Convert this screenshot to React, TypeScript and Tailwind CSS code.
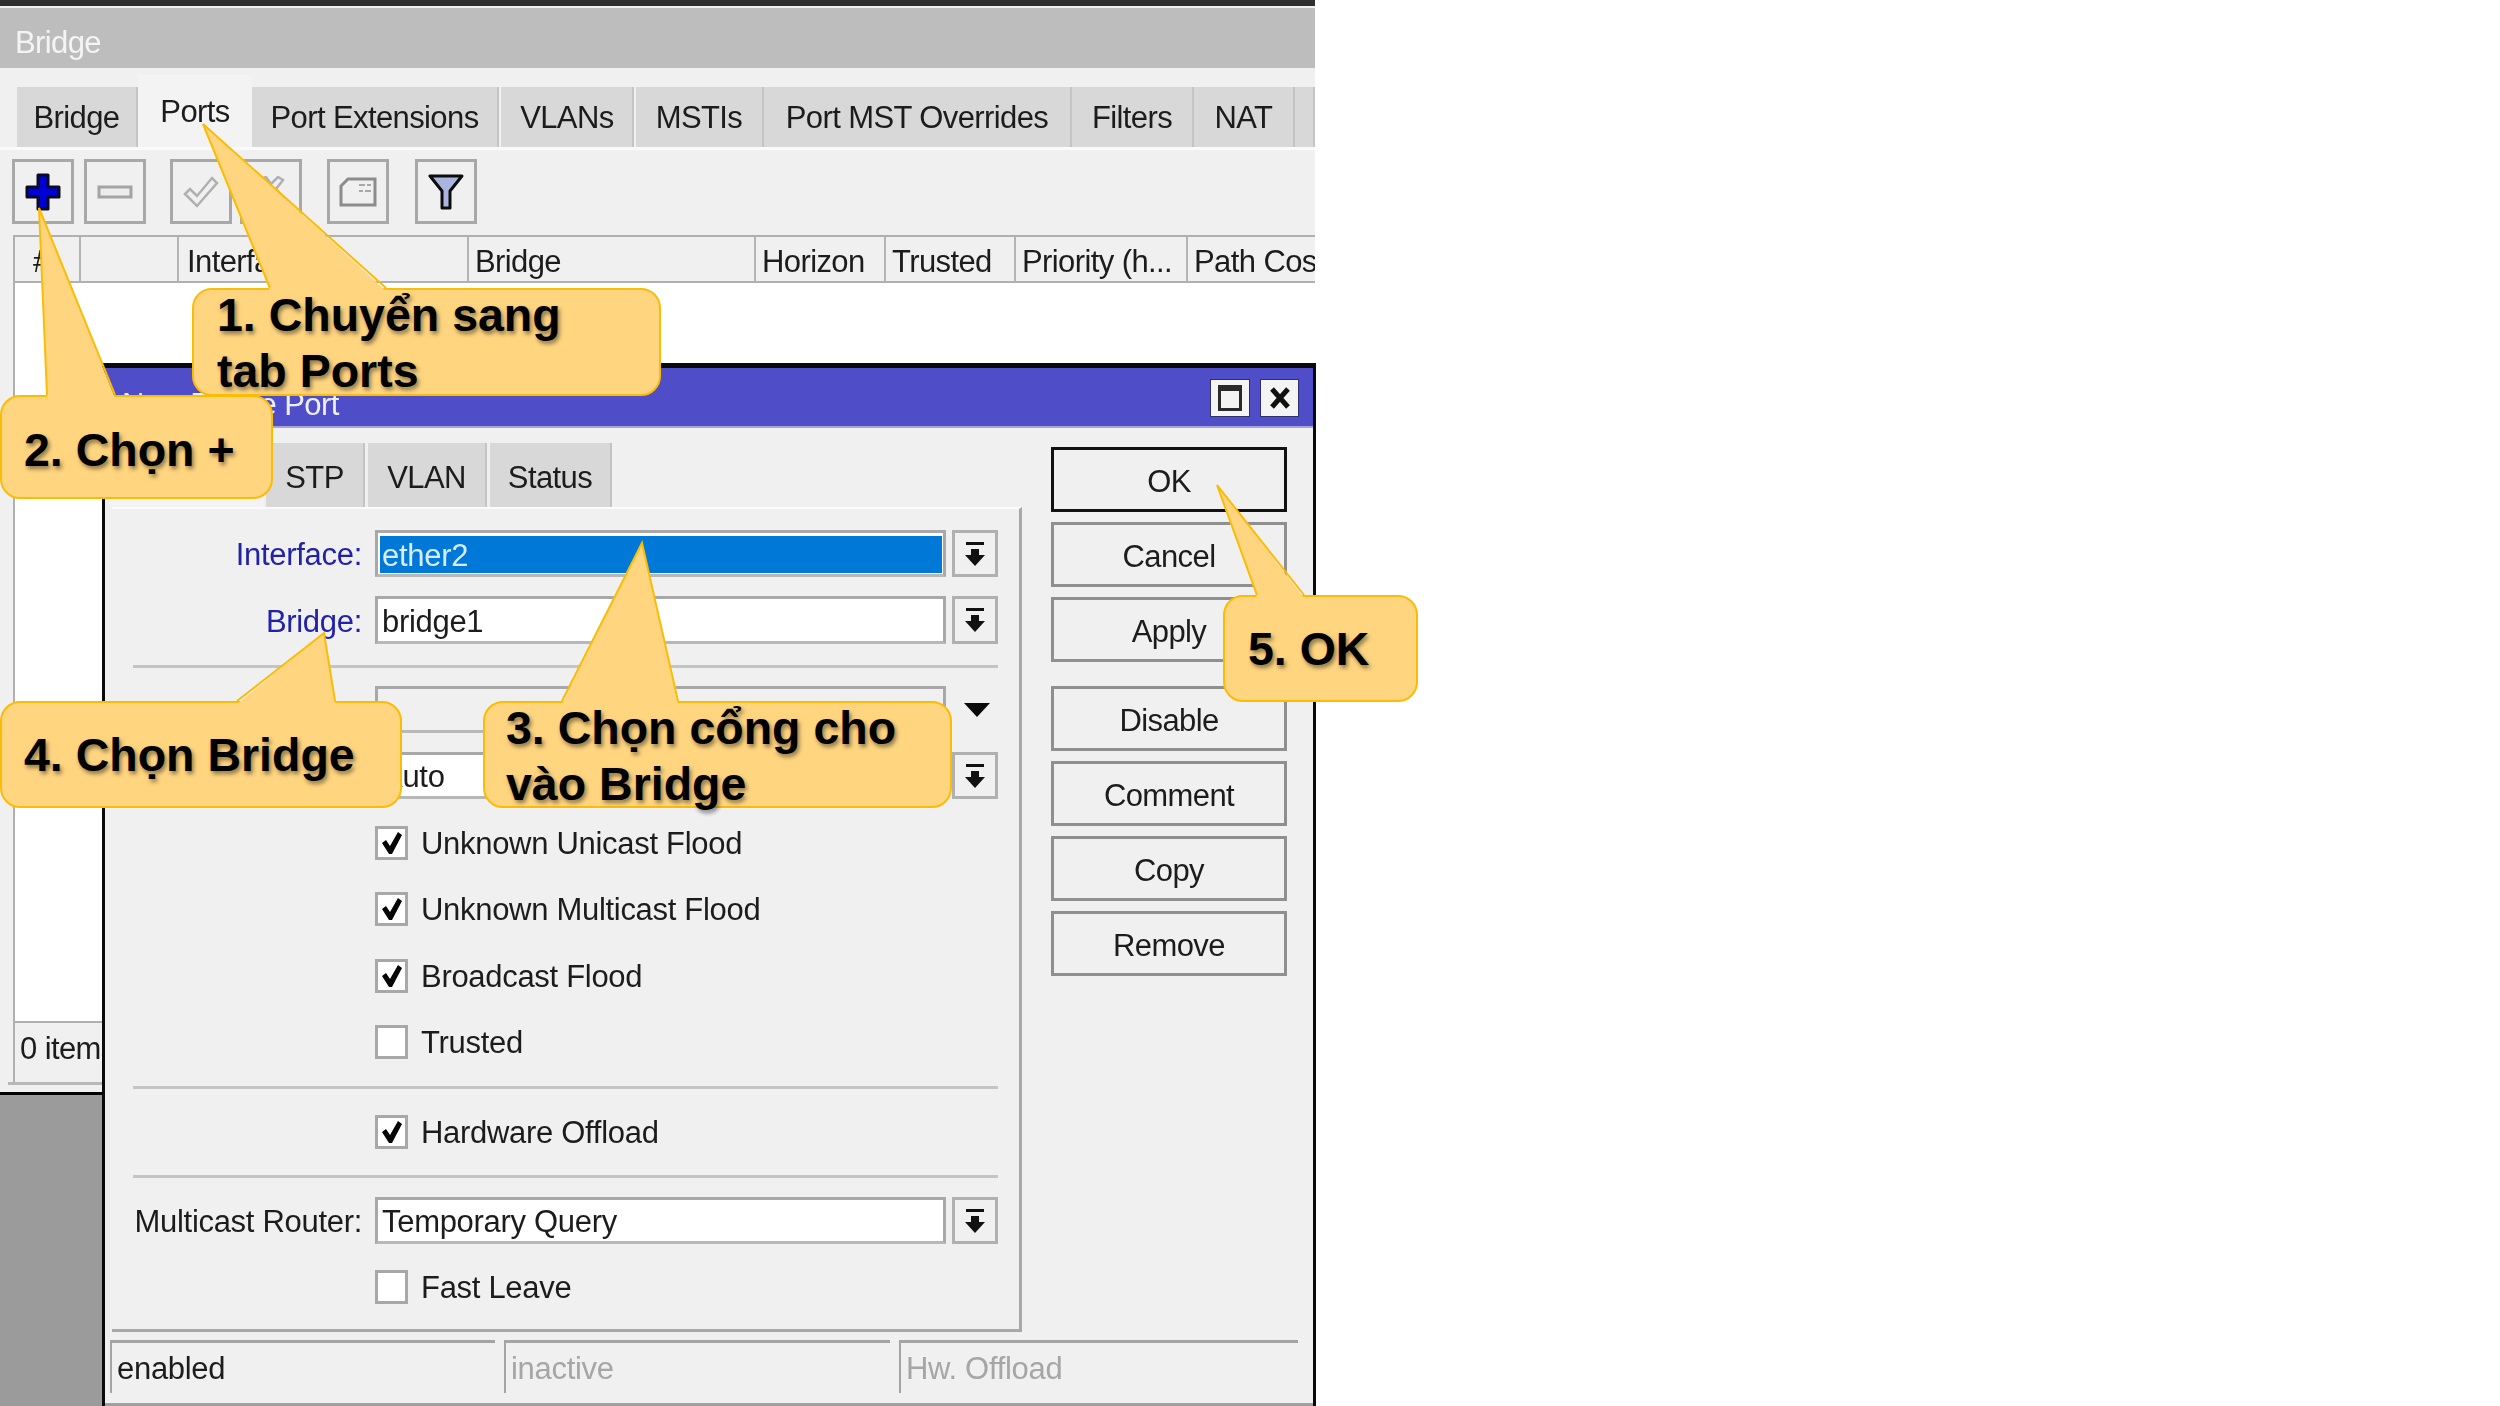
const uiFont = "font-['Liberation_Sans',Arial,sans-serif] text-[31px] leading-none tracking-[-0.3px] text-[#1c1c1c]";
const tabFont = "font-['Liberation_Sans',Arial,sans-serif] text-[31px] leading-none tracking-[-0.6px] text-[#1c1c1c]";

function DropIcon() {
  return (
    <svg width="24" height="26" viewBox="0 0 24 26" className="shrink-0">
      <rect x="3" y="1" width="18" height="3" fill="#111" />
      <path d="M8 8h8v6h6L12 25 2 14h6z" fill="#111" />
    </svg>
  );
}

function CheckMark() {
  return (
    <svg width="22" height="24" viewBox="0 0 22 24">
      <path d="M1 12l4-3 4 6L17 1l4 3-10 19H8z" fill="#050505" />
    </svg>
  );
}

function MainTab({ label, width, active }: { label: string; width: string; active?: boolean }) {
  return (
    <div className={`${width} ${active ? 'h-[72px] bg-[#f3f3f3]' : 'h-[60px] bg-[#d8d8d8] border-r-2 border-[#c4c4c4]'} shrink-0 flex items-center justify-center`}>
      <span className={tabFont}>{label}</span>
    </div>
  );
}

function HeadCell({ label, width, className }: { label: string; width: string; className?: string }) {
  return (
    <div className={`${width} shrink-0 h-full border-r-2 border-[#b4b4b4] pt-[5px] flex items-center overflow-hidden whitespace-nowrap ${className ?? 'pl-[6px]'}`}>
      <span className={tabFont}>{label}</span>
    </div>
  );
}

function ToolButton({ children, className }: { children: React.ReactNode; className: string }) {
  return (
    <div className={`w-[62px] h-[65px] border-[3px] border-[#a8a8a8] flex items-center justify-center shrink-0 ${className}`}>
      {children}
    </div>
  );
}

function DialogTab({ label, width }: { label: string; width: string }) {
  return (
    <div className={`${width} h-[64px] mr-[3px] pt-[5px] bg-[#d8d8d8] border-r-2 border-[#c4c4c4] flex items-center justify-center shrink-0`}>
      <span className={tabFont}>{label}</span>
    </div>
  );
}

function FieldRow({ label, value, blue, height, className }: { label: string; value: string; blue?: boolean; height: string; className: string }) {
  return (
    <div className={`flex ${height} ${className}`}>
      <div className={`w-[250px] pt-[2px] flex items-center justify-end ${uiFont} ${blue ? '!text-[#2222a8]' : ''}`}>{label}</div>
      <div className="ml-[13px] w-[571px] border-[3px] border-[#a8a8a8] border-b-[#b8b8b8] bg-white flex items-center p-[2px]">
        <div className={`w-full h-full pt-[2px] flex items-center pl-[2px] ${uiFont}`}>{value}</div>
      </div>
      <div className="ml-[6px] w-[46px] border-[3px] border-[#b0b0b0] flex items-center justify-center"><DropIcon /></div>
    </div>
  );
}

function Check({ label, checked, className }: { label: string; checked?: boolean; className: string }) {
  return (
    <div className={`flex items-center h-[34px] pl-[263px] ${className}`}>
      <div className="w-[33px] h-[34px] border-[3px] border-[#a8a8a8] bg-white flex items-center justify-center shrink-0">
        {checked && <CheckMark />}
      </div>
      <span className={`ml-[13px] whitespace-nowrap ${uiFont}`}>{label}</span>
    </div>
  );
}

function ActionButton({ label, primary, className }: { label: string; primary?: boolean; className?: string }) {
  return (
    <div className={`w-[236px] h-[65px] pt-[3px] border-[3px] ${primary ? 'border-[#111]' : 'border-[#8f8f8f]'} flex items-center justify-center ${className ?? ''}`}>
      <span className={tabFont}>{label}</span>
    </div>
  );
}

function StatusCell({ label, width, dim }: { label: string; width: string; dim?: boolean }) {
  return (
    <div className={`${width} h-[53px] border-t-[3px] border-l-2 border-[#a4a4a4] pl-[5px] flex items-center`}>
      <span className={`${uiFont} ${dim ? '!text-[#a6a6a6]' : ''}`}>{label}</span>
    </div>
  );
}

const calloutText = "font-['Liberation_Sans',Arial,sans-serif] font-bold text-[46.5px] leading-[56px] text-black [text-shadow:2px_3px_4px_rgba(0,0,0,0.45)]";

export default function App() {
  return (
    <div className="relative w-[2500px] h-[1406px] overflow-hidden bg-white">
      {/* desktop behind the windows */}
      <div className="absolute left-0 top-[1095px] w-[1315px] h-[311px] bg-[#9b9b9b]" />

      {/* Bridge window */}
      <div className="absolute left-0 top-0 w-[1315px] h-[1095px] blur-[0.5px] bg-[#f0f0f0] border-t-[6px] border-b-[3px] border-t-[#2e2e2e] border-b-black pt-[2px] flex flex-col">
        <div className="h-[60px] shrink-0 bg-[#bdbdbd] pl-[15px] flex items-center">
          <span className={`${tabFont} !text-[#f4f4f4] pt-[8px]`}>Bridge</span>
        </div>
        <div className="h-[79px] shrink-0 pl-[17px] flex items-end overflow-hidden">
          <MainTab label="Bridge" width="w-[121px]" />
          <MainTab label="Ports" width="w-[114px]" active />
          <MainTab label="Port Extensions" width="w-[247px]" />
          <div className="w-[3px]" />
          <MainTab label="VLANs" width="w-[133px]" />
          <div className="w-[2px]" />
          <MainTab label="MSTIs" width="w-[128px]" />
          <MainTab label="Port MST Overrides" width="w-[308px]" />
          <MainTab label="Filters" width="w-[122px]" />
          <MainTab label="NAT" width="w-[101px]" />
          <MainTab label="" width="w-[20px]" />
        </div>
        <div className="h-[3px] shrink-0 bg-[#fafafa]" />
        <div className="h-[74px] shrink-0 pt-[9px] pl-[12px] flex items-start">
          <ToolButton className="">
            <svg width="36" height="38" viewBox="0 0 36 38">
              <path d="M13 2h10v12h11v10H23v12H13V24H2V14h11z" fill="#0000d8" stroke="#0b0b28" strokeWidth="3" strokeLinejoin="round" />
            </svg>
          </ToolButton>
          <ToolButton className="ml-[10px]">
            <svg width="36" height="14" viewBox="0 0 36 14">
              <rect x="2" y="2" width="32" height="10" fill="#ececec" stroke="#a4a4a4" strokeWidth="3" />
            </svg>
          </ToolButton>
          <ToolButton className="ml-[24px]">
            <svg width="36" height="32" viewBox="0 0 36 32">
              <path d="M2 18l5-5 7 7L29 2l5 5-20 23z" fill="none" stroke="#b0b0b0" strokeWidth="2.5" />
            </svg>
          </ToolButton>
          <ToolButton className="ml-[8px]">
            <svg width="36" height="32" viewBox="0 0 36 32">
              <path d="M8 3l5-2 5 7 7-7 5 3-7 9 8 9-5 4-7-7-7 7-5-4 8-9z" fill="none" stroke="#b0b0b0" strokeWidth="2.5" />
            </svg>
          </ToolButton>
          <ToolButton className="ml-[25px]">
            <svg width="38" height="30" viewBox="0 0 38 30">
              <path d="M9 2h27v26H2V9z" fill="none" stroke="#8c8c8c" strokeWidth="3" />
              <path d="M20 8h6M28 8h4M20 14h4M26 14h6" stroke="#a8a8a8" strokeWidth="2" />
            </svg>
          </ToolButton>
          <ToolButton className="ml-[26px]">
            <svg width="36" height="38" viewBox="0 0 36 38">
              <path d="M2 3h32l-12 15v17h-8V18z" fill="#aab4e0" stroke="#0c0c0c" strokeWidth="3" strokeLinejoin="round" />
            </svg>
          </ToolButton>
        </div>
        <div className="h-[11px] shrink-0" />
        <div className="h-[48px] shrink-0 ml-[13px] flex border-y-2 border-l-2 border-[#b0b0b0] overflow-hidden">
          <HeadCell label="#" width="w-[66px]" className="pl-[18px]" />
          <HeadCell label="" width="w-[98px]" />
          <HeadCell label="Interface" width="w-[290px]" className="pl-[8px]" />
          <HeadCell label="Bridge" width="w-[287px]" />
          <HeadCell label="Horizon" width="w-[130px]" />
          <HeadCell label="Trusted" width="w-[130px]" />
          <HeadCell label="Priority (h..." width="w-[172px]" />
          <HeadCell label="Path Cost" width="w-[130px]" />
        </div>
        <div className="flex-1 ml-[13px] bg-white border-l-2 border-[#b0b0b0]" />
        <div className="h-[61px] shrink-0 ml-[13px] pb-[8px] border-l-2 border-t-2 border-[#b0b0b0] pl-[5px] flex items-center">
          <span className={tabFont}>0 items</span>
        </div>
        <div className="h-[10px] shrink-0 ml-[8px] border-t-[3px] border-[#b8b8b8]" />
      </div>

      {/* New Bridge Port dialog */}
      <div className="absolute left-[102px] top-[363px] w-[1214px] h-[1043px] blur-[0.5px] border-x-[3px] border-t-[5px] border-[#0a0a0a] bg-[#f0f0f0] flex flex-col">
        <div className="h-[60px] shrink-0 bg-[#4f4ec8] border-b-2 border-[#a5a5dc] pl-[17px] pr-[14px] flex items-center justify-between">
          <span className={`${tabFont} !text-[#eeeefa] pt-[14px]`}>New Bridge Port</span>
          <div className="flex gap-[10px] pt-[2px]">
            <div className="w-[40px] h-[38px] bg-[#f4f4f4] border border-[#30306e] flex items-center justify-center">
              <div className="w-[24px] h-[26px] border-[3px] border-t-[6px] border-[#2a2a2a]" />
            </div>
            <div className="w-[39px] h-[38px] bg-[#f4f4f4] border border-[#30306e] flex items-center justify-center">
              <svg width="22" height="24" viewBox="0 0 22 24">
                <path d="M3 3l16 18M19 3L3 21" stroke="#111" strokeWidth="5" />
              </svg>
            </div>
          </div>
        </div>
        <div className="flex h-[904px] shrink-0">
          <div className="w-[917px] flex flex-col">
            <div className="h-[79px] shrink-0 pl-[5px] pr-0 flex items-end">
              <div className="w-[154px] h-[72px] bg-[#f3f3f3] mr-[2px] flex items-center justify-center">
                <span className={tabFont}>General</span>
              </div>
              <DialogTab label="STP" width="w-[99px]" />
              <DialogTab label="VLAN" width="w-[119px]" />
              <DialogTab label="Status" width="w-[122px]" />
            </div>
            <div className="h-[825px] ml-[7px] border-t-2 border-t-[#fbfbfb] border-r-[3px] border-b-[3px] border-r-[#a8a8a8] border-b-[#a8a8a8] flex flex-col">
              <FieldRow label="Interface:" value="" blue height="h-[47px]" className="mt-[21px]" />
              <FieldRow label="Bridge:" value="bridge1" blue height="h-[48px]" className="mt-[19px]" />
              <div className="mt-[21px] ml-[21px] w-[865px] h-[3px] bg-[#c4c4c4] shrink-0" />
              <div className="mt-[18px] h-[47px] flex shrink-0">
                <div className="ml-[263px] w-[571px] border-[3px] border-[#a8a8a8] border-b-[#b8b8b8] bg-[#f0f0f0]" />
                <div className="ml-[8px] w-[46px] flex items-center justify-center">
                  <svg width="28" height="16" viewBox="0 0 28 16"><path d="M1 1h26L14 15z" fill="#0a0a0a" /></svg>
                </div>
              </div>
              <FieldRow label="" value="Auto" height="h-[47px]" className="mt-[19px]" />
              <Check label="Unknown Unicast Flood" checked className="mt-[27px]" />
              <Check label="Unknown Multicast Flood" checked className="mt-[32px]" />
              <Check label="Broadcast Flood" checked className="mt-[33px]" />
              <Check label="Trusted" className="mt-[32px]" />
              <div className="mt-[27px] ml-[21px] w-[865px] h-[3px] bg-[#c4c4c4] shrink-0" />
              <Check label="Hardware Offload" checked className="mt-[26px]" />
              <div className="mt-[26px] ml-[21px] w-[865px] h-[3px] bg-[#c4c4c4] shrink-0" />
              <FieldRow label="Multicast Router:" value="Temporary Query" height="h-[47px]" className="mt-[19px]" />
              <Check label="Fast Leave" className="mt-[26px]" />
            </div>
          </div>
          <div className="pt-[19px] pl-[29px] flex flex-col gap-[10px]">
            <ActionButton label="OK" primary />
            <ActionButton label="Cancel" />
            <ActionButton label="Apply" />
            <ActionButton label="Disable" className="mt-[14px]" />
            <ActionButton label="Comment" />
            <ActionButton label="Copy" />
            <ActionButton label="Remove" />
          </div>
        </div>
        <div className="mt-[8px] pl-[5px] flex gap-[9px]">
          <StatusCell label="enabled" width="w-[385px]" />
          <StatusCell label="inactive" width="w-[386px]" dim />
          <StatusCell label="Hw. Offload" width="w-[399px]" dim />
        </div>
        <div className="mt-auto h-[3px] bg-[#a0a0a0] shrink-0" />
      </div>

      {/* selected text in the Interface field sits over the field */}
      <div className="absolute left-[380px] top-[536px] w-[562px] h-[37px] blur-[0.5px] bg-[#0078d7] pl-[2px] pt-[2px] flex items-center">
        <span className={`${uiFont} !text-[#d8ecff]`}>ether2</span>
      </div>

      {/* callout boxes */}
      <div className={`absolute left-[192px] top-[288px] w-[469px] h-[108px] bg-[#ffd580] border-2 border-[#fbbc05] rounded-[20px] pl-[23px] ${calloutText}`}>
        <div className="-mt-[3px]">1. Chuyển sang<br />tab Ports</div>
      </div>
      <div className={`absolute left-0 top-[395px] w-[273px] h-[104px] bg-[#ffd580] border-2 border-[#fbbc05] rounded-[20px] pl-[22px] pt-[6px] flex items-center ${calloutText}`}>
        2. Chọn +
      </div>
      <div className={`absolute left-[483px] top-[701px] w-[469px] h-[107px] bg-[#ffd580] border-2 border-[#fbbc05] rounded-[20px] pl-[21px] ${calloutText}`}>
        <div className="-mt-[3px]">3. Chọn cổng cho<br />vào Bridge</div>
      </div>
      <div className={`absolute left-0 top-[701px] w-[402px] h-[107px] bg-[#ffd580] border-2 border-[#fbbc05] rounded-[20px] pl-[22px] flex items-center ${calloutText}`}>
        4. Chọn Bridge
      </div>
      <div className={`absolute left-[1223px] top-[595px] w-[195px] h-[107px] bg-[#ffd580] border-2 border-[#fbbc05] rounded-[20px] pl-[23px] flex items-center ${calloutText}`}>
        5. OK
      </div>

      {/* callout pointers */}
      <svg className="absolute left-0 top-0 w-[2500px] h-[1406px] pointer-events-none" viewBox="0 0 2500 1406">
        <polygon points="203,124 270,291 386,291" fill="#ffd580" />
        <polyline points="270,288 203,124 386,288" fill="none" stroke="#fbbc05" strokeWidth="2" />
        <polygon points="39,208 47,398 115,398" fill="#ffd580" />
        <polyline points="47,395 39,208 115,395" fill="none" stroke="#fbbc05" strokeWidth="2" />
        <polygon points="642,543 562,704 678,704" fill="#ffd580" />
        <polyline points="562,701 642,543 678,701" fill="none" stroke="#fbbc05" strokeWidth="2" />
        <polygon points="324,633 237,704 335,704" fill="#ffd580" />
        <polyline points="237,701 324,633 335,701" fill="none" stroke="#fbbc05" strokeWidth="2" />
        <polygon points="1217,485 1257,598 1304,598" fill="#ffd580" />
        <polyline points="1257,595 1217,485 1304,595" fill="none" stroke="#fbbc05" strokeWidth="2" />
      </svg>
    </div>
  );
}
